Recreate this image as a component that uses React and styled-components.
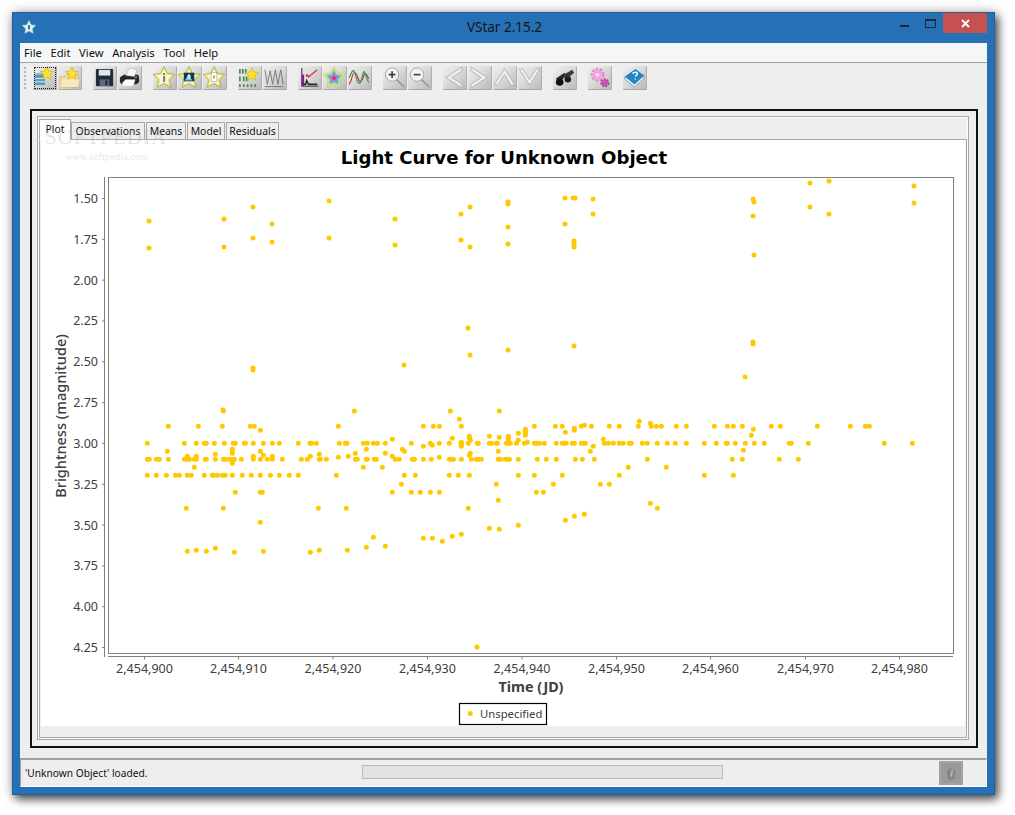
import React from "react";
import styled, { createGlobalStyle } from "styled-components";

const UI_FONT = '"Noto Sans", "Open Sans", "DejaVu Sans", sans-serif';

const GlobalStyle = createGlobalStyle`
  html, body {
    margin: 0;
    padding: 0;
    background: #fff;
    font-family: ${UI_FONT};
  }
`;

const Page = styled.div`
  box-sizing: border-box;
  width: 1015px;
  height: 815px;
  padding: 12px 0 0 12px;
  background: #fff;
`;

const Window = styled.div`
  box-sizing: border-box;
  width: 983px;
  height: 783px;
  padding: 0 7px 7px;
  display: flex;
  flex-direction: column;
  background: #2671b5;
  border: 1px solid #1f5f99;
  box-shadow: 3px 4px 9px rgba(0, 0, 0, 0.7), 0 0 12px rgba(0, 0, 0, 0.2);
`;

const TitleBar = styled.div`
  flex: 0 0 30px;
  display: grid;
  grid-template-columns: 1fr auto 1fr;
  margin-right: -7px;
`;

const AppIcon = styled.svg`
  width: 14px;
  height: 14px;
  margin: 7px 0 0 2px;
`;

const Title = styled.div`
  font-size: 13.5px;
  line-height: 29px;
  color: #10161c;
  padding-right: 5px;
`;

const WindowControls = styled.div`
  display: flex;
  justify-content: flex-end;
  margin-right: 7px;
`;

const ControlButton = styled.div`
  width: ${(p) => p.$w}px;
  height: 20px;
  display: flex;
  align-items: center;
  justify-content: center;
  background: ${(p) => (p.$close ? "#c75050" : "transparent")};
`;

const Client = styled.div`
  flex: 1;
  min-height: 0;
  display: flex;
  flex-direction: column;
  background: #eeeeee;
`;

const MenuBar = styled.div`
  box-sizing: border-box;
  flex: 0 0 20px;
  display: flex;
  align-items: center;
  gap: 8.6px;
  padding-left: 4px;
  background: #f5f6f8;
  border-bottom: 1px solid #a0a0a0;
  font-size: 11.2px;
  color: #111;
`;

const MenuItem = styled.span`
  line-height: 19px;
`;

const ToolBar = styled.div`
  box-sizing: border-box;
  flex: 0 0 46px;
  display: flex;
  align-items: flex-start;
  padding: 3px 0 0 4px;
`;

const Grip = styled.div`
  width: 2px;
  height: 24px;
  margin: 1px 7px 0 0;
  background: repeating-linear-gradient(to bottom, #b4b4b4 0 2px, transparent 2px 4px);
`;

const ToolGroup = styled.div`
  display: flex;
  gap: 1px;
  margin-right: 11px;
`;

const ToolButton = styled.div`
  box-sizing: border-box;
  width: 24px;
  height: 24px;
  border-radius: 1px;
  background: linear-gradient(135deg, #efefef 0%, #dcdcdc 45%, #b9b9b9 100%);
  border-right: 1px solid #b0b0b0;
  border-bottom: 1px solid #a8a8a8;
  outline: ${(p) => (p.$focus ? "1px dotted #222" : "none")};
  outline-offset: -2px;
  svg {
    display: block;
    width: 23px;
    height: 23px;
  }
`;

const Frame = styled.div`
  box-sizing: border-box;
  width: 948px;
  height: 639px;
  margin-left: 10px;
  padding: 5px 7px 6px 5px;
  border: 2px solid #111;
`;

const Etched = styled.div`
  box-sizing: border-box;
  height: 100%;
  display: flex;
  flex-direction: column;
  border: 1px solid #a8a8a8;
  box-shadow: inset 0 0 0 1px #fbfbfb;
  padding: 2px 1px 1px;
  position: relative;
`;

const TabRow = styled.div`
  flex: 0 0 21px;
  display: flex;
  align-items: flex-end;
  position: relative;
  z-index: 1;
  margin-bottom: -1px;
`;

const Tab = styled.div`
  box-sizing: border-box;
  height: ${(p) => (p.$active ? "21px" : "18px")};
  width: ${(p) => p.$w}px;
  font-size: 10.4px;
  text-align: center;
  color: #111;
  line-height: ${(p) => (p.$active ? "18px" : "17px")};
  background: ${(p) => (p.$active ? "#fff" : "#eeeeee")};
  border: 1px solid #a8a8a8;
  border-bottom: ${(p) => (p.$active ? "1px solid #fff" : "1px solid #a8a8a8")};
  margin-right: ${(p) => (p.$active ? "0" : "1px")};
`;

const TabPanel = styled.div`
  flex: 1;
  min-height: 0;
  display: flex;
  flex-direction: column;
  border: 1px solid #a8a8a8;
  padding: 0 1px;
`;

const ChartArea = styled.svg`
  display: block;
  width: 924px;
  height: 586px;
  background: #fff;
`;

const Watermark = styled.div`
  position: absolute;
  left: ${(p) => p.$x}px;
  top: ${(p) => p.$y}px;
  font-family: "Liberation Serif", serif;
  font-size: ${(p) => p.$size}px;
  letter-spacing: ${(p) => p.$spacing}px;
  color: rgba(170, 170, 170, 0.32);
  white-space: nowrap;
  z-index: 2;
  pointer-events: none;
`;

const StatusBar = styled.div`
  flex: 1;
  margin-top: 10px;
  display: flex;
  align-items: center;
  border-top: 2px solid #a0a0a0;
  border-left: 1px solid #a0a0a0;
  border-right: 1px solid #fff;
  border-bottom: 1px solid #fff;
  font-size: 10.2px;
  color: #111;
`;

const StatusText = styled.div`
  width: 341px;
  padding-left: 4px;
  box-sizing: border-box;
`;

const Progress = styled.div`
  box-sizing: border-box;
  width: 361px;
  height: 14px;
  margin-bottom: 3px;
  background: #e3e3e3;
  border: 1px solid #bcbcbc;
`;

const StopButton = styled.div`
  width: 24px;
  height: 24px;
  margin-left: 216px;
  background: #a3a3a3;
  svg {
    display: block;
    width: 24px;
    height: 24px;
  }
`;

const starPoints = (cx, cy, R, r) => {
  const pts = [];
  for (let i = 0; i < 10; i++) {
    const rad = i % 2 === 0 ? R : r;
    const a = -Math.PI / 2 + (i * Math.PI) / 5;
    pts.push(`${(cx + rad * Math.cos(a)).toFixed(2)},${(cy + rad * Math.sin(a)).toFixed(2)}`);
  }
  return pts.join(" ");
};

const Star = ({ cx, cy, R, fill = "#ffe22e", stroke = "#c9a800", sw = 0.6 }) => (
  <polygon points={starPoints(cx, cy, R, R * 0.45)} fill={fill} stroke={stroke} strokeWidth={sw} strokeLinejoin="round" />
);

const BigStar = ({ children }) => (
  <>
    <polygon points={starPoints(11.5, 12.5, 12, 6)} fill="#f3e96a" stroke="#a89c30" strokeWidth="0.7" strokeLinejoin="round" />
    <polygon points={starPoints(11.5, 12.5, 8.6, 4.4)} fill="#f4f4ee" />
    {children}
  </>
);

const icons = [
  // new star file from database
  <>
    <ellipse cx="7" cy="9" rx="5.5" ry="2" fill="#8fc3dc" />
    <rect x="1.5" y="9" width="11" height="11" fill="#5a9cbc" />
    <path d="M1.5 13h11M1.5 16.5h11" stroke="#dff0f6" strokeWidth="1" />
    <Star cx={14.5} cy={8} R={7.5} />
  </>,
  // folder
  <>
    <path d="M2 11h5l2-2h12v13H2z" fill="#f0dca0" stroke="#bfa868" strokeWidth="0.6" />
    <path d="M2 22l3-8h17l-1 8z" fill="#f7e8ba" />
    <Star cx={14.5} cy={8} R={7} />
  </>,
  // floppy
  <>
    <rect x="3" y="3" width="18" height="18" rx="1" fill="#1e2b3a" />
    <rect x="6" y="4" width="12" height="6" fill="#dfe6ee" />
    <rect x="7" y="14" width="10" height="7" fill="#5e6b78" />
    <rect x="13" y="15" width="2" height="5" fill="#16202c" />
  </>,
  // printer
  <>
    <path d="M2 12l4-3h15l1 3v5l-3 2H4l-2-2z" fill="#262626" />
    <path d="M8 10l4-8 8 2-3 7z" fill="#f8f8f8" stroke="#9a9a9a" strokeWidth="0.5" />
    <path d="M5 17l3-3h10l-2 7H4z" fill="#fdfdfd" stroke="#b0b0b0" strokeWidth="0.4" />
    <rect x="17" y="11" width="3" height="1.2" fill="#aab" />
  </>,
  // star info
  <BigStar>
    <rect x="10.4" y="7.5" width="2.2" height="2" fill="#8a7a20" />
    <path d="M10.6 10.5h2v6h-2z" fill="#8a7a20" />
  </BigStar>,
  // star image
  <BigStar>
    <rect x="6" y="7" width="11" height="9" fill="#123a55" />
    <path d="M7 15l4-6 4 6z" fill="#6fc6ee" />
    <path d="M10 10l1.5-2 1.5 2v3h-3z" fill="#d9f2ff" />
  </BigStar>,
  // star document
  <BigStar>
    <rect x="8.5" y="7" width="6" height="9" fill="#fff" stroke="#888" strokeWidth="0.5" />
    <rect x="10.5" y="10" width="2" height="3" fill="#c9a800" />
  </BigStar>,
  // binary digits and star
  <>
    <path d="M2 3v5M5 3v5M8 3v5M2 11v5M6 11v5M9 11v5M2 19v3M6 19v3M10 19v3M14 19v3M18 19v3" stroke="#3d8a52" strokeWidth="1.7" />
    <Star cx={14.5} cy={9} R={7.5} />
  </>,
  // grey wave
  <path d="M2 4l2.5 15 3-14 2.5 14 3-15 2.5 15 3-15 2.5 15M2 21.5h19" fill="none" stroke="#6d6d6d" strokeWidth="0.9" />,
  // plot
  <>
    <path d="M4 2v19h17" fill="none" stroke="#222" strokeWidth="1" />
    <rect x="4" y="9" width="2.4" height="12" fill="#7a1fa8" />
    <path d="M6 19h2l1-4 2 4h9" fill="none" stroke="#222" strokeWidth="1.4" />
    <path d="M9 9l2 2.5L20 4" fill="none" stroke="#e03344" strokeWidth="1.4" />
    <circle cx="9.5" cy="10" r="1.4" fill="#e03344" />
  </>,
  // rainbow star
  <>
    <polygon points={starPoints(11.5, 12.5, 12, 6.6)} fill="#efe86a" stroke="#b4b04a" strokeWidth="0.4" />
    <polygon points={starPoints(11.5, 12.5, 9.4, 5.2)} fill="#72d8b0" />
    <polygon points={starPoints(11.5, 12.5, 7, 3.9)} fill="#6f9fee" />
    <polygon points={starPoints(11.5, 12.5, 4.6, 2.7)} fill="#d56ad8" />
    <circle cx="11.5" cy="12.5" r="1.8" fill="#e8263a" />
  </>,
  // waves
  <>
    <path d="M1 19c3-2 3-12 6-12s3 9 6 9 3-8 5-8 2 4 4 5" fill="none" stroke="#cc2a3a" strokeWidth="1.2" />
    <path d="M1 12c2-2 3-8 5-7s3 14 6 13 3-13 5-12 3 11 5 11" fill="none" stroke="#2e9a4e" strokeWidth="1.2" />
  </>,
  // zoom in
  <>
    <path d="M14 14l8 8" stroke="#9c9c9c" strokeWidth="2" />
    <circle cx="9.5" cy="9" r="7" fill="#f2f2f2" stroke="#a4a4a4" strokeWidth="1" />
    <path d="M6 9h7M9.5 5.5v7" stroke="#33404f" strokeWidth="1.7" />
  </>,
  // zoom out
  <>
    <path d="M14 14l8 8" stroke="#9c9c9c" strokeWidth="2" />
    <circle cx="9.5" cy="9" r="7" fill="#f2f2f2" stroke="#a4a4a4" strokeWidth="1" />
    <path d="M6 9h7" stroke="#33404f" strokeWidth="1.7" />
  </>,
  // previous
  <path d="M20 1L3 12l17 11v-4L9 12l11-7z" fill="#f0f0f0" stroke="#a6a6a6" strokeWidth="0.8" />,
  // next
  <path d="M3 1l17 11L3 23v-4l11-7L3 5z" fill="#f0f0f0" stroke="#a6a6a6" strokeWidth="0.8" />,
  // up
  <path d="M1 20L12 3l11 17h-4L12 9 5 20z" fill="#f0f0f0" stroke="#a6a6a6" strokeWidth="0.8" />,
  // down
  <path d="M1 3l11 17L23 3h-4l-7 11L5 3z" fill="#f0f0f0" stroke="#a6a6a6" strokeWidth="0.8" />,
  // binoculars
  <>
    <path d="M3 13l9-6 2 3-8 8z" fill="#2a2a2a" />
    <path d="M11 9l9-5 2 3-8 7z" fill="#3a3a3a" />
    <ellipse cx="7" cy="17" rx="4" ry="3.6" fill="#111" />
    <ellipse cx="15.5" cy="14" rx="3.4" ry="3.2" fill="#1c1c1c" />
  </>,
  // pink gears
  <>
    <circle cx="10" cy="9" r="5.5" fill="none" stroke="#e58ad0" strokeWidth="3.6" strokeDasharray="2.6 1.3" />
    <circle cx="10" cy="9" r="5" fill="#f0a6df" />
    <circle cx="10" cy="9" r="1.8" fill="#f7e2f2" />
    <circle cx="17.5" cy="17.5" r="3.4" fill="none" stroke="#b0339a" strokeWidth="2.6" strokeDasharray="1.9 1" />
    <circle cx="17.5" cy="17.5" r="3" fill="#c84fb4" />
  </>,
  // help book
  <>
    <path d="M2 11L13 3l9 7-10 9z" fill="#1f86c8" />
    <path d="M2 11v3l10 8 10-9v-3l-10 9z" fill="#e9f0f6" stroke="#1b5f94" strokeWidth="0.5" />
    <path d="M10 8c1-2 5-2 5 0 0 1.5-2 1.5-2 3M12.8 13v1" fill="none" stroke="#fff" strokeWidth="1.5" />
  </>,
];

const toolGroups = [
  [0, 1],
  [2, 3],
  [4, 5, 6],
  [7, 8],
  [9, 10, 11],
  [12, 13],
  [14, 15, 16, 17],
  [18],
  [19],
  [20],
];

const MENUS = ["File", "Edit", "View", "Analysis", "Tool", "Help"];

const TABS = [
  { label: "Plot", w: 32, active: true },
  { label: "Observations", w: 74 },
  { label: "Means", w: 40 },
  { label: "Model", w: 38 },
  { label: "Residuals", w: 53 },
];

// pixel positions are page coordinates; the chart's viewBox starts at the panel corner
const fromCrop = (ox, oy, list) => list.map(([x, y]) => [ox + x / 3, oy + y / 3]);
const row = (ox, oy, y, xs) => fromCrop(ox, oy, xs.map((x) => [x, y]));

const points = [
  [149, 221], [149, 248], [224, 219], [224, 247], [253, 207], [253, 238], [272, 224], [272, 242],
  [329, 201], [329, 238], [395, 219], [395, 245], [461, 214], [461, 240], [470, 207], [470, 247],
  [508, 202], [508, 204], [508, 227], [508, 244], [565, 198], [573, 198], [575, 198], [565, 224],
  [574, 241], [574, 244], [574, 247], [593, 199], [593, 214], [753, 199], [754, 202], [753, 216],
  [754, 255], [810, 183], [810, 207], [829, 181], [829, 214], [914, 186], [914, 203],
  [468, 328], [470, 355], [508, 350], [404, 365], [574, 346], [253, 368], [253, 370], [753, 342],
  [753, 344], [745, 377], [223, 410], [477, 647],
  ...row(100, 410, 100, [142, 253, 289, 313, 319, 343, 373, 400, 406, 433, 436, 460, 490, 517, 538, 595, 630, 635, 649, 718, 736, 741, 790, 802, 820, 832]),
  ...row(100, 410, 148, [142, 148, 169, 178, 205, 253, 262, 268, 283, 289, 316, 319, 346, 370, 376, 388, 397, 403, 424, 460, 481, 502, 517, 547, 604, 622, 658, 661, 679, 766, 772, 799, 802, 823, 829]),
  ...row(100, 410, 196, [142, 169, 199, 226, 238, 262, 274, 313, 337, 340, 352, 367, 376, 397, 427, 454, 481, 511, 538, 568, 595, 709]),
  ...fromCrop(100, 410, [
    [370, 3], [763, 3], [205, 49], [295, 49], [367, 49], [451, 49], [463, 49], [481, 61], [715, 49],
    [202, 124], [397, 118], [397, 124], [397, 130], [346, 133], [262, 139], [289, 139], [460, 139],
    [517, 139], [631, 139], [658, 133], [481, 124], [490, 136], [715, 142], [745, 139], [766, 130],
    [799, 118], [283, 172], [397, 160], [790, 172], [406, 247], [481, 247], [487, 247], [259, 295],
    [370, 295], [655, 295], [739, 295], [481, 337], [820, 382], [799, 412], [262, 424], [289, 421],
    [319, 424], [346, 415], [403, 427], [490, 424], [631, 427], [658, 421], [742, 421],
  ]),
  ...row(380, 410, 100, [16, 94, 151, 178, 208, 244, 265, 292, 295, 328, 334, 349, 352, 379, 385, 391, 409, 433, 463, 469, 478, 493, 529, 547, 553, 559, 577, 583, 604, 610, 616, 673, 685, 700, 718, 730, 748, 754, 787, 802, 832]),
  ...row(380, 410, 148, [46, 58, 97, 103, 130, 154, 208, 214, 220, 244, 274, 289, 295, 304, 355, 361, 376, 382, 388, 415, 472, 499, 529, 586, 607, 643, 802]),
  ...fromCrop(380, 410, [
    [211, 3], [358, 3], [238, 28], [130, 49], [160, 49], [178, 49], [244, 49], [463, 49], [526, 49],
    [547, 49], [604, 49], [613, 46], [634, 49], [688, 49], [718, 49], [775, 49], [811, 40], [814, 49],
    [829, 49], [778, 34], [583, 55], [583, 61], [556, 67], [436, 58], [436, 64], [436, 70], [436, 76],
    [415, 70], [37, 88], [217, 85], [268, 79], [268, 85], [271, 91], [328, 79], [358, 82], [385, 79],
    [385, 85], [385, 91], [670, 88], [415, 91], [442, 97], [130, 109], [157, 106], [244, 97], [244, 103],
    [244, 109], [640, 109], [631, 124], [16, 130], [67, 118], [73, 124], [355, 124], [271, 130],
    [268, 136], [37, 139], [178, 142], [7, 172], [73, 196], [106, 196], [208, 196], [235, 196],
    [268, 196], [415, 196], [463, 196], [547, 196], [718, 196], [745, 172], [64, 223], [349, 223],
    [520, 223], [661, 223], [688, 223], [37, 247], [94, 247], [121, 247], [151, 247], [178, 247],
    [469, 247], [490, 247], [355, 271], [265, 295], [811, 280], [832, 295], [556, 331], [583, 319],
    [613, 313], [328, 355], [358, 358], [415, 346], [130, 385], [157, 385], [187, 394], [217, 379],
    [244, 373], [16, 409],
  ]),
  ...fromCrop(660, 410, [
    [4, 49], [49, 49], [79, 49], [163, 49], [202, 49], [220, 49], [247, 49], [334, 49], [361, 49],
    [472, 49], [571, 49], [616, 49], [628, 49], [280, 58], [274, 76], [22, 100], [46, 100], [79, 100],
    [133, 100], [169, 100], [199, 100], [202, 100], [226, 100], [256, 100], [283, 100], [313, 100],
    [388, 100], [394, 100], [445, 100], [673, 100], [757, 100], [250, 121], [217, 148], [247, 148],
    [358, 148], [415, 148], [19, 172], [133, 196], [220, 196],
  ]),
];

const Y_TICKS = ["1.50", "1.75", "2.00", "2.25", "2.50", "2.75", "3.00", "3.25", "3.50", "3.75", "4.00", "4.25"];
const X_TICKS = [
  ["2,454,900", 144.5], ["2,454,910", 238.5], ["2,454,920", 333], ["2,454,930", 427.5], ["2,454,940", 522],
  ["2,454,950", 616.5], ["2,454,960", 710.5], ["2,454,970", 805.5], ["2,454,980", 899.5],
];

const AXIS = "#808080";
const LABEL = "#404040";

const LightCurve = () => (
  <ChartArea viewBox="41 140 924 586" fontFamily={UI_FONT}>
    <text x="504" y="164" textAnchor="middle" fontFamily='"DejaVu Sans", sans-serif' fontWeight="700" fontSize="18.1" fill="#000">
      Light Curve for Unknown Object
    </text>
    <rect x="108.5" y="177.5" width="845" height="476" fill="#fff" stroke={AXIS} />
    <path d="M104.5 177v480M108 656.5h845" stroke={AXIS} fill="none" />
    {Y_TICKS.map((label, i) => {
      const y = 198.5 + i * 40.82;
      return (
        <g key={label}>
          <path d={`M102 ${y}h2.5`} stroke={AXIS} />
          <text x="98" y={y + 4.5} textAnchor="end" fontSize="12.5" fill={LABEL}>{label}</text>
        </g>
      );
    })}
    {X_TICKS.map(([label, x]) => (
      <g key={label}>
        <path d={`M${x} 657v2.5`} stroke={AXIS} />
        <text x={x} y="672.5" textAnchor="middle" fontSize="12.5" fill={LABEL}>{label}</text>
      </g>
    ))}
    <text x="531" y="692" textAnchor="middle" fontSize="14.3" fontWeight="700" fill={LABEL}>Time (JD)</text>
    <text transform="translate(66 416) rotate(-90)" textAnchor="middle" fontSize="14.5" fontWeight="500" fill={LABEL}>
      Brightness (magnitude)
    </text>
    {points.map(([x, y], i) => (
      <circle key={i} cx={x} cy={y} r="2.5" fill="#ffc800" />
    ))}
    <rect x="459.5" y="703.5" width="87" height="21" fill="#fff" stroke="#000" strokeWidth="1.2" />
    <circle cx="470.3" cy="713.5" r="2.5" fill="#ffc800" />
    <text x="480" y="718" fontSize="11.3" fill={LABEL}>Unspecified</text>
  </ChartArea>
);

const App = () => (
  <Page>
    <GlobalStyle />
    <Window>
      <TitleBar>
        <AppIcon viewBox="0 0 24 24">
          <polygon points={starPoints(12, 13, 12, 6)} fill="#dff1ee" stroke="#a9d4d2" strokeWidth="1" />
          <rect x="10.5" y="9" width="3" height="7" fill="#3c5a78" />
        </AppIcon>
        <Title>VStar 2.15.2</Title>
        <WindowControls>
          <ControlButton $w={26}>
            <svg width="9" height="8" viewBox="0 0 9 8"><rect width="9" height="2" y="6" fill="#1c2733" /></svg>
          </ControlButton>
          <ControlButton $w={26}>
            <svg width="11" height="9" viewBox="0 0 11 9"><path d="M.5 1h10v7.5H.5z" fill="none" stroke="#1c2733" /><rect width="11" height="2" fill="#1c2733" /></svg>
          </ControlButton>
          <ControlButton $w={44} $close>
            <svg width="9" height="9" viewBox="0 0 9 9"><path d="M1 1l7 7M8 1L1 8" stroke="#fff" strokeWidth="1.8" /></svg>
          </ControlButton>
        </WindowControls>
      </TitleBar>
      <Client>
        <MenuBar>
          {MENUS.map((m) => <MenuItem key={m}>{m}</MenuItem>)}
        </MenuBar>
        <ToolBar>
          <Grip />
          {toolGroups.map((group, g) => (
            <ToolGroup key={g}>
              {group.map((idx) => (
                <ToolButton key={idx} $focus={idx === 0}>
                  <svg viewBox="0 0 24 24">{icons[idx]}</svg>
                </ToolButton>
              ))}
            </ToolGroup>
          ))}
        </ToolBar>
        <Frame>
          <Etched>
            <Watermark $x={7} $y={8} $size={21} $spacing={1}>SOFTPEDIA</Watermark>
            <Watermark $x={27} $y={34} $size={10} $spacing={0.2}>www.softpedia.com</Watermark>
            <TabRow>
              {TABS.map((t) => (
                <Tab key={t.label} $w={t.w} $active={t.active}>{t.label}</Tab>
              ))}
            </TabRow>
            <TabPanel>
              <LightCurve />
            </TabPanel>
          </Etched>
        </Frame>
        <StatusBar>
          <StatusText>'Unknown Object' loaded.</StatusText>
          <Progress />
          <StopButton>
            <svg viewBox="0 0 24 24">
              <rect x="2" y="2" width="20" height="20" rx="3" fill="#9a9a9a" />
              <path d="M8 9h2v-2h4v2h2v7l-2 3h-4l-2-3z" fill="#858585" />
              <path d="M13 7l1 3-1 6-2-1z" fill="#b4b4b4" />
            </svg>
          </StopButton>
        </StatusBar>
      </Client>
    </Window>
  </Page>
);

export default App;
